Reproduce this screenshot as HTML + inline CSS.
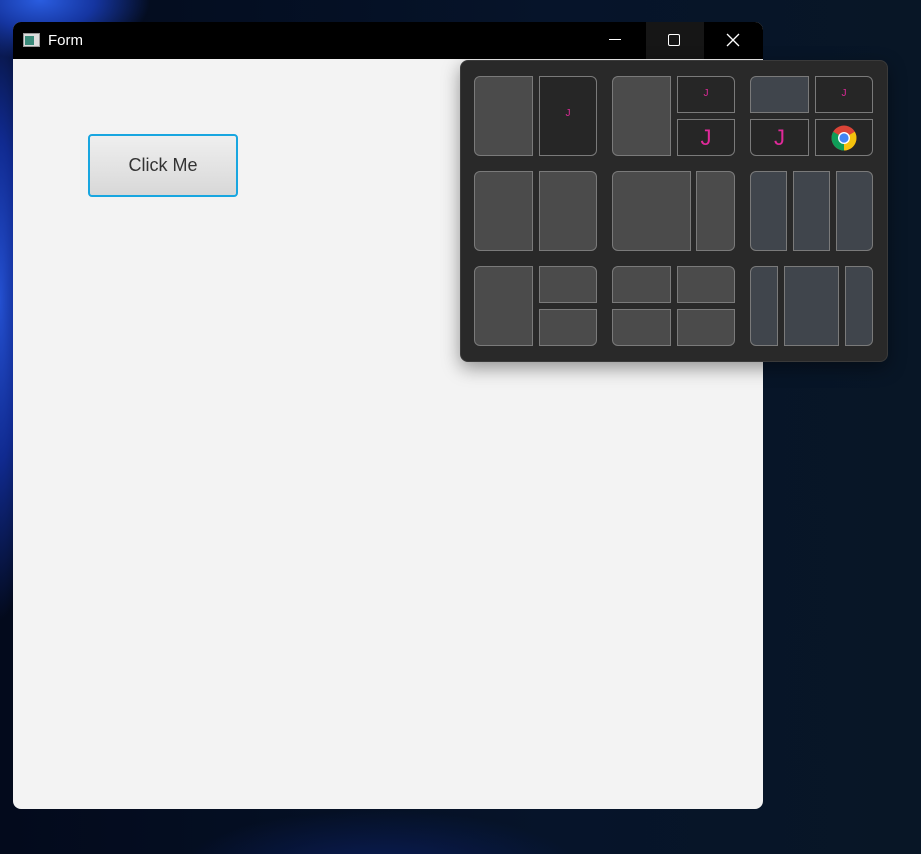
<!DOCTYPE html>
<html><head><meta charset="utf-8"><style>
html,body{margin:0;padding:0;width:921px;height:854px;overflow:hidden;background:#04101f;font-family:"Liberation Sans",sans-serif;}
.bg{position:absolute;inset:0;background:
radial-gradient(ellipse 110px 60px at 40px 0px,#2a5de0 0%,#1535a0 50%,rgba(10,30,90,0) 100%),
radial-gradient(ellipse 40px 320px at 0px 300px,#2450d0 0%,#102a90 50%,rgba(10,30,90,0) 100%),
radial-gradient(ellipse 200px 60px at 380px 870px,#0a1c55 0%,rgba(8,20,60,0) 100%),
linear-gradient(90deg,#030a1c 0%,#06142a 60%,#081626 100%);}
.a{position:absolute;box-sizing:border-box}
.win{left:13px;top:22px;width:750px;height:787px;background:#f3f3f3;border-radius:8px;overflow:hidden;}
.tb{left:0;top:0;width:750px;height:37px;background:#000;}
.c{position:absolute;box-sizing:border-box;border:1px solid #7a7a7a;background:#4b4b4b;}
.d{background:#262626}
.b{background:#40454c}
.j{position:absolute;color:#e0299a;text-align:center;width:100%}
</style></head><body>
<div class="bg"></div>
<div class="a win">
 <div class="a tb">
  <div class="a" style="left:10px;top:11px;width:17px;height:14px;background:#ddd;border:1px solid #999"><div class="a" style="left:1px;top:2px;width:9px;height:9px;background:#3a8a7a"></div></div>
  <div class="a" style="left:35px;top:10px;color:#fff;font-size:15px">Form</div>
  <div class="a" style="left:596px;top:17px;width:12px;height:1px;background:#fff"></div>
  <div class="a" style="left:633px;top:0;width:58px;height:37px;background:#161616"></div>
  <div class="a" style="left:655px;top:12px;width:12px;height:12px;border:1.5px solid #fff;border-radius:2px"></div>
  <svg class="a" style="left:713px;top:11px" width="14" height="14"><path d="M1 1L13 13M13 1L1 13" stroke="#fff" stroke-width="1.3"/></svg>
 </div>
 <div class="a" style="left:75px;top:112px;width:150px;height:63px;border:2px solid #18a6e0;border-radius:4px;background:linear-gradient(#efefef,#d8d8d8);color:#333;font-size:18px;text-align:center;line-height:59px">Click Me</div>
</div>
<div class="a" style="left:460px;top:60px;width:428px;height:302px;background:#292929;border-radius:8px;box-shadow:0 6px 18px rgba(0,0,0,.4);border:1px solid #3a3a3a"></div>
<div class="c" style="left:474px;top:76px;width:59px;height:80px;border-radius:6px 0 0 6px"></div>
<div class="c d" style="left:539px;top:76px;width:58px;height:80px;border-radius:0 6px 6px 0"><div class="j" style="top:31px;font-size:10px">J</div></div>
<div class="c" style="left:612px;top:76px;width:59px;height:80px;border-radius:6px 0 0 6px"></div>
<div class="c d" style="left:677px;top:76px;width:58px;height:37px;border-radius:0 6px 0 0"><div class="j" style="top:11px;font-size:10px">J</div></div>
<div class="c d" style="left:677px;top:119px;width:58px;height:37px;border-radius:0 0 6px 0"><div class="j" style="top:5px;font-size:22px">J</div></div>
<div class="c b" style="left:750px;top:76px;width:59px;height:37px;border-radius:6px 0 0 0"></div>
<div class="c d" style="left:815px;top:76px;width:58px;height:37px;border-radius:0 6px 0 0"><div class="j" style="top:11px;font-size:10px">J</div></div>
<div class="c d" style="left:750px;top:119px;width:59px;height:37px;border-radius:0 0 0 6px"><div class="j" style="top:5px;font-size:22px">J</div></div>
<div class="c d" style="left:815px;top:119px;width:58px;height:37px;border-radius:0 0 6px 0">
 <svg class="a" style="left:15px;top:5px" width="26" height="26" viewBox="0 0 26 26"><circle cx="13" cy="13" r="12.5" fill="#db4437"/><path d="M13 13L2.2 6.8A12.5 12.5 0 0 0 13 25.5Z" fill="#0f9d58"/><path d="M13 13L13 25.5A12.5 12.5 0 0 0 23.8 6.8Z" fill="#f4c20d"/><circle cx="13" cy="13" r="6" fill="#fff"/><circle cx="13" cy="13" r="4.6" fill="#4285f4"/></svg>
</div>
<div class="c" style="left:474px;top:171px;width:59px;height:80px;border-radius:6px 0 0 6px"></div>
<div class="c" style="left:539px;top:171px;width:58px;height:80px;border-radius:0 6px 6px 0"></div>
<div class="c" style="left:612px;top:171px;width:79px;height:80px;border-radius:6px 0 0 6px"></div>
<div class="c" style="left:696px;top:171px;width:39px;height:80px;border-radius:0 6px 6px 0"></div>
<div class="c b" style="left:750px;top:171px;width:37px;height:80px;border-radius:6px 0 0 6px"></div>
<div class="c b" style="left:793px;top:171px;width:37px;height:80px"></div>
<div class="c b" style="left:836px;top:171px;width:37px;height:80px;border-radius:0 6px 6px 0"></div>
<div class="c" style="left:474px;top:266px;width:59px;height:80px;border-radius:6px 0 0 6px"></div>
<div class="c" style="left:539px;top:266px;width:58px;height:37px;border-radius:0 6px 0 0"></div>
<div class="c" style="left:539px;top:309px;width:58px;height:37px;border-radius:0 0 6px 0"></div>
<div class="c" style="left:612px;top:266px;width:59px;height:37px;border-radius:6px 0 0 0"></div>
<div class="c" style="left:677px;top:266px;width:58px;height:37px;border-radius:0 6px 0 0"></div>
<div class="c" style="left:612px;top:309px;width:59px;height:37px;border-radius:0 0 0 6px"></div>
<div class="c" style="left:677px;top:309px;width:58px;height:37px;border-radius:0 0 6px 0"></div>
<div class="c b" style="left:750px;top:266px;width:28px;height:80px;border-radius:6px 0 0 6px"></div>
<div class="c b" style="left:784px;top:266px;width:55px;height:80px"></div>
<div class="c b" style="left:845px;top:266px;width:28px;height:80px;border-radius:0 6px 6px 0"></div>
</body></html>
